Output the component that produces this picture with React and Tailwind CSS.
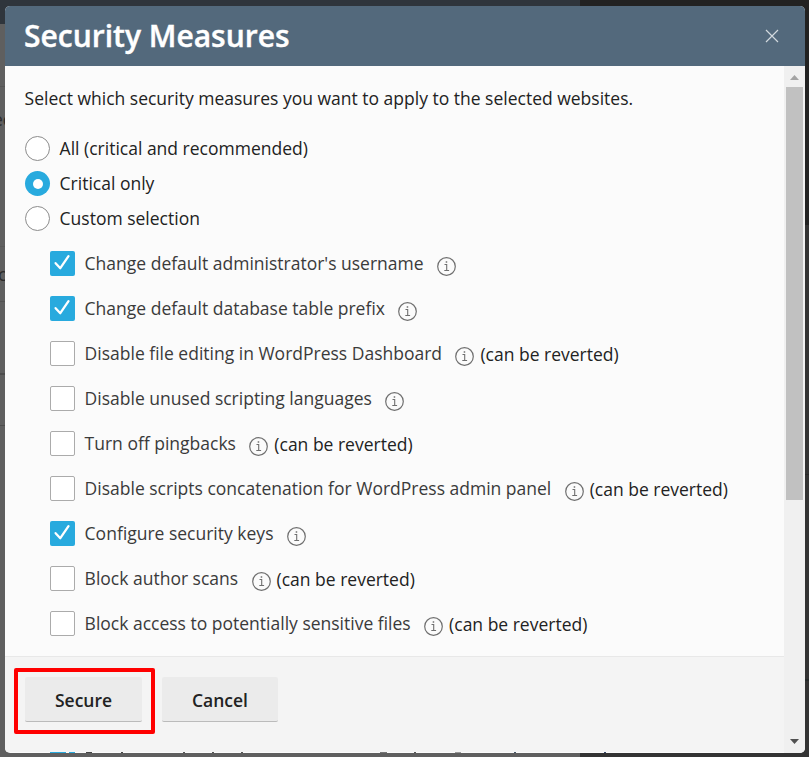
const RADIOS = [
  { label: 'All (critical and recommended)' },
  { label: 'Critical only', selected: true },
  { label: 'Custom selection' },
];

const MEASURES = [
  { label: "Change default administrator's username", checked: true },
  { label: 'Change default database table prefix', checked: true },
  { label: 'Disable file editing in WordPress Dashboard', revertable: true },
  { label: 'Disable unused scripting languages' },
  { label: 'Turn off pingbacks', revertable: true },
  { label: 'Disable scripts concatenation for WordPress admin panel', revertable: true },
  { label: 'Configure security keys', checked: true },
  { label: 'Block author scans', revertable: true },
  { label: 'Block access to potentially sensitive files', revertable: true },
];

function InfoIcon() {
  return (
    <svg className="ml-[13.4px] mt-[6px] h-[19px] w-[19px] shrink-0" viewBox="0 0 19 19" fill="none" stroke="#6f6f6f">
      <circle cx="9.5" cy="9.5" r="8.8" strokeWidth="1.2" />
      <path d="M7.5 7.5h2.2v5.6M7.3 13.5h4.8" strokeWidth="1.1" />
      <path d="M8.7 5h1.5" strokeWidth="1.5" />
    </svg>
  );
}

function Checkbox({ checked }) {
  if (!checked) {
    return <span className="h-[25px] w-[25px] shrink-0 rounded-[2px] border border-[#ababab] bg-white" />;
  }
  return (
    <span className="h-[25px] w-[25px] shrink-0 rounded-[2px] bg-[#28aade]">
      <svg className="h-[25px] w-[25px]" viewBox="0 0 25 25" fill="none" stroke="white" strokeWidth="2.3" strokeLinecap="round" strokeLinejoin="round">
        <path d="M5.6 12.2l4.7 5L18.5 5.2" />
      </svg>
    </span>
  );
}

function Measure({ label, checked, revertable }) {
  return (
    <li className="flex h-[25px] items-center whitespace-nowrap">
      <Checkbox checked={checked} />
      <span className="ml-[9.6px] text-[#3a3a3a]">{label}</span>
      <InfoIcon />
      {revertable && <span className="ml-[6px] mt-[2px]">(can be reverted)</span>}
    </li>
  );
}

function Backdrop() {
  return (
    <div className="absolute inset-0 flex text-[17.5px] leading-[25px] text-[#2b2b2b]">
      <div className="flex w-[580px] flex-col bg-[#5f5f5f]">
        <div className="h-6 bg-[#2f353c]" />
        <div className="h-[62px]" />
        <div className="h-px bg-[#555]" />
        <div className="h-[159px] pt-[20px]"><span className="-ml-[7px]">ec</span></div>
        <div className="h-px bg-[#585858]" />
        <div className="h-[54px] pt-[15px]"><span className="-ml-[2px]">c</span></div>
        <div className="h-px bg-[#525252]" />
        <div className="h-[71px]" />
        <div className="h-0.5 bg-[#4d4d4d]" />
        <div className="h-[50px]" />
        <div className="h-px bg-[#4d4d4d]" />
      </div>
      <div className="flex flex-1 flex-col bg-[#333]">
        <div className="h-[225px] bg-[#222]" />
        <div className="h-[249px]" />
        <div className="h-px bg-[#292929]" />
        <div className="h-[204px]" />
        <div className="h-0.5 bg-[#262b2b]" />
      </div>
    </div>
  );
}

export default function App() {
  return (
    <div className="relative h-[757px] w-[809px] overflow-hidden bg-[#333] font-['Open_Sans','Noto_Sans',sans-serif]">
      <Backdrop />
      <div className="relative mt-[6px] ml-[5px] flex h-[747px] w-[800px] flex-col overflow-hidden rounded-[5px] bg-[#fbfbfb] text-[17.5px] leading-[25px] text-[#222]">
        <header className="flex h-[60px] shrink-0 items-center justify-between bg-[#53697c] pr-[26px] pl-[19px]">
          <h1 className="text-[30px] leading-[40px] font-semibold text-white [-webkit-text-stroke:0.4px_white]">Security Measures</h1>
          <svg className="h-[14px] w-[14px]" viewBox="0 0 14 14" stroke="#d2d9de" strokeWidth="1.2" aria-label="Close">
            <path d="M1 1l12 12M13 1L1 13" />
          </svg>
        </header>

        <div className="flex min-h-0 flex-1">
          <div className="flex w-[779px] flex-col">
            <div className="h-[590px] shrink-0 px-5 pt-5">
              <p className="-ml-[0.4px] whitespace-nowrap">Select which security measures you want to apply to the selected websites.</p>
              <div className="mt-[25px] flex flex-col gap-[10px]">
                {RADIOS.map(({ label, selected }) => (
                  <div key={label} className="flex h-[25px] items-center">
                    {selected
                      ? <span className="flex h-[25px] w-[25px] items-center justify-center rounded-full bg-[#28aade]"><span className="h-[10px] w-[10px] rounded-full bg-white" /></span>
                      : <span className="h-[25px] w-[25px] rounded-full border border-[#8c8c8c] bg-white" />}
                    <span className="ml-[9.6px]">{label}</span>
                  </div>
                ))}
              </div>
              <ul className="mt-5 ml-[25px] flex flex-col gap-5">
                {MEASURES.map(m => <Measure key={m.label} {...m} />)}
              </ul>
            </div>

            <footer className="flex h-[96px] shrink-0 items-start border-t border-[#e8e8e8] bg-[#f4f4f4] pt-[11px] pl-[9px] font-semibold">
              <div className="h-[66px] w-[141px] rounded-[2px] border-4 border-[#f00] pt-[5px] pl-[7px]">
                <button className="h-[45px] w-[117px] rounded-[2px] border-b border-[#bbb] bg-[#ebebeb] pt-[2px]">Secure</button>
              </div>
              <button className="mt-[9px] ml-[7px] h-[45px] w-[116px] rounded-[2px] border-b border-[#bbb] bg-[#ebebeb] pt-[2px]">Cancel</button>
            </footer>

            {/* Top edge of the next row, visible under the footer */}
            <div className="flex h-px shrink-0 items-start overflow-hidden pl-[45px]">
              <span className="h-px w-4 bg-[#28aade]" />
              <span className="ml-[3px] h-px w-[6px] bg-[#28aade]" />
              <span className="ml-[11px] h-px w-[6px] bg-[#444]" />
              <span className="ml-[29px] h-px w-0.5 bg-[#444]" />
              <span className="ml-[60px] h-px w-0.5 bg-[#555]" />
              <span className="ml-[27px] h-px w-0.5 bg-[#555]" />
              <span className="ml-[27px] h-px w-0.5 bg-[#555]" />
              <span className="ml-[137px] h-px w-[7px] bg-[#777]" />
              <span className="ml-[27px] h-px w-0.5 bg-[#555]" />
              <span className="ml-[39px] h-px w-[6px] bg-[#999]" />
              <span className="ml-[53px] h-px w-0.5 bg-[#456]" />
              <span className="ml-[88px] h-px w-0.5 bg-[#346]" />
            </div>
          </div>

          <div className="flex w-[21px] flex-col items-center bg-[#f0f0f0]">
            <svg className="mt-[9px] h-[5px] w-[9px] shrink-0" viewBox="0 0 9 5" fill="#a3a3a3"><path d="M0 5L4.5 0L9 5z" /></svg>
            <div className="mt-[7px] h-[413px] w-[17px] shrink-0 bg-[#c1c1c1]" />
            <svg className="mt-auto mb-[9px] h-[5px] w-[9px] shrink-0" viewBox="0 0 9 5" fill="#505050"><path d="M0 0h9L4.5 5z" /></svg>
          </div>
        </div>
      </div>
    </div>
  );
}
